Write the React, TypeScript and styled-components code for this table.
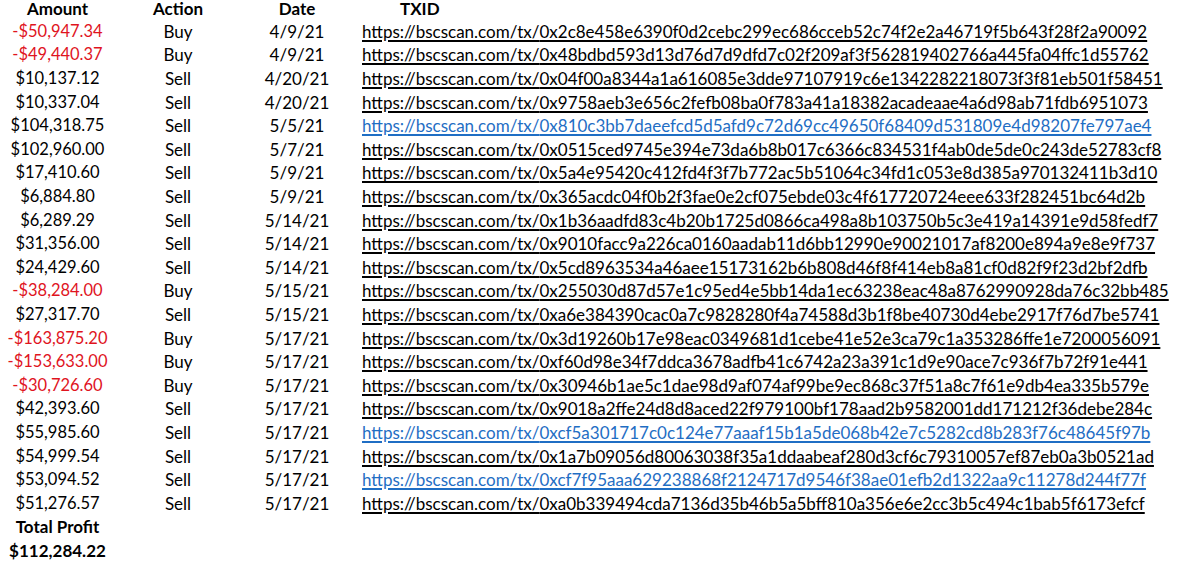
import { createGlobalStyle, styled } from "styled-components";

type Tx = {
  amount: string;
  action: "Buy" | "Sell";
  date: string;
  hash: string;
  visited?: boolean;
};

const rows: Tx[] = [
  { amount: "-$50,947.34", action: "Buy", date: "4/9/21", hash: "0x2c8e458e6390f0d2cebc299ec686cceb52c74f2e2a46719f5b643f28f2a90092" },
  { amount: "-$49,440.37", action: "Buy", date: "4/9/21", hash: "0x48bdbd593d13d76d7d9dfd7c02f209af3f562819402766a445fa04ffc1d55762" },
  { amount: "$10,137.12", action: "Sell", date: "4/20/21", hash: "0x04f00a8344a1a616085e3dde97107919c6e1342282218073f3f81eb501f58451" },
  { amount: "$10,337.04", action: "Sell", date: "4/20/21", hash: "0x9758aeb3e656c2fefb08ba0f783a41a18382acadeaae4a6d98ab71fdb6951073" },
  { amount: "$104,318.75", action: "Sell", date: "5/5/21", hash: "0x810c3bb7daeefcd5d5afd9c72d69cc49650f68409d531809e4d98207fe797ae4", visited: true },
  { amount: "$102,960.00", action: "Sell", date: "5/7/21", hash: "0x0515ced9745e394e73da6b8b017c6366c834531f4ab0de5de0c243de52783cf8" },
  { amount: "$17,410.60", action: "Sell", date: "5/9/21", hash: "0x5a4e95420c412fd4f3f7b772ac5b51064c34fd1c053e8d385a970132411b3d10" },
  { amount: "$6,884.80", action: "Sell", date: "5/9/21", hash: "0x365acdc04f0b2f3fae0e2cf075ebde03c4f617720724eee633f282451bc64d2b" },
  { amount: "$6,289.29", action: "Sell", date: "5/14/21", hash: "0x1b36aadfd83c4b20b1725d0866ca498a8b103750b5c3e419a14391e9d58fedf7" },
  { amount: "$31,356.00", action: "Sell", date: "5/14/21", hash: "0x9010facc9a226ca0160aadab11d6bb12990e90021017af8200e894a9e8e9f737" },
  { amount: "$24,429.60", action: "Sell", date: "5/14/21", hash: "0x5cd8963534a46aee15173162b6b808d46f8f414eb8a81cf0d82f9f23d2bf2dfb" },
  { amount: "-$38,284.00", action: "Buy", date: "5/15/21", hash: "0x255030d87d57e1c95ed4e5bb14da1ec63238eac48a8762990928da76c32bb485" },
  { amount: "$27,317.70", action: "Sell", date: "5/15/21", hash: "0xa6e384390cac0a7c9828280f4a74588d3b1f8be40730d4ebe2917f76d7be5741" },
  { amount: "-$163,875.20", action: "Buy", date: "5/17/21", hash: "0x3d19260b17e98eac0349681d1cebe41e52e3ca79c1a353286ffe1e7200056091" },
  { amount: "-$153,633.00", action: "Buy", date: "5/17/21", hash: "0xf60d98e34f7ddca3678adfb41c6742a23a391c1d9e90ace7c936f7b72f91e441" },
  { amount: "-$30,726.60", action: "Buy", date: "5/17/21", hash: "0x30946b1ae5c1dae98d9af074af99be9ec868c37f51a8c7f61e9db4ea335b579e" },
  { amount: "$42,393.60", action: "Sell", date: "5/17/21", hash: "0x9018a2ffe24d8d8aced22f979100bf178aad2b9582001dd171212f36debe284c" },
  { amount: "$55,985.60", action: "Sell", date: "5/17/21", hash: "0xcf5a301717c0c124e77aaaf15b1a5de068b42e7c5282cd8b283f76c48645f97b", visited: true },
  { amount: "$54,999.54", action: "Sell", date: "5/17/21", hash: "0x1a7b09056d80063038f35a1ddaabeaf280d3cf6c79310057ef87eb0a3b0521ad" },
  { amount: "$53,094.52", action: "Sell", date: "5/17/21", hash: "0xcf7f95aaa629238868f2124717d9546f38ae01efb2d1322aa9c11278d244f77f", visited: true },
  { amount: "$51,276.57", action: "Sell", date: "5/17/21", hash: "0xa0b339494cda7136d35b46b5a5bff810a356e6e2cc3b5c494c1bab5f6173efcf" },
];

const App = () => {
  return (
    <>
      <GlobalStyle />
      <Sheet>
        <Head>Amount</Head>
        <Head>Action</Head>
        <Head>Date</Head>
        <Head $txid>TXID</Head>
        {rows.map((r, idx) => (
          <Row key={idx}>
            <Amount $negative={r.amount.startsWith("-")}>{r.amount}</Amount>
            <Cell>{r.action}</Cell>
            <Cell>{r.date}</Cell>
            <Link $visited={r.visited}>https://bscscan.com/tx/{r.hash}</Link>
          </Row>
        ))}
        <Total>Total Profit</Total>
        <Total>$112,284.22</Total>
      </Sheet>
    </>
  );
};

export default App;

const GlobalStyle = createGlobalStyle`
  html, body {
    margin: 0;
    padding: 0;
    background: #ffffff;
  }
`;

const Sheet = styled.div`
  display: grid;
  grid-template-columns: 115px 126px 112px 1fr;
  grid-template-rows: 19.6px;
  grid-auto-rows: 23.6px;
  align-items: center;

  font-family: Lato, "Liberation Sans", sans-serif;
  font-size: 17px;
  line-height: 21px;
  color: #000;
`;

const Row = styled.div`
  display: contents;
`;

const Head = styled.div<{ $txid?: boolean }>`
  align-self: start;
  line-height: 18px;
  font-weight: 700;
  text-align: ${(p) => (p.$txid ? "left" : "center")};
  padding-left: ${(p) => (p.$txid ? "47px" : "0")};
`;

const Cell = styled.div`
  text-align: center;
  white-space: nowrap;
`;

const Amount = styled(Cell)<{ $negative: boolean }>`
  font-size: 16.5px;
  color: ${(p) => (p.$negative ? "#e0141e" : "#000")};
`;

const Link = styled.div<{ $visited?: boolean }>`
  padding-left: 9px;
  white-space: nowrap;
  text-decoration: underline;
  text-decoration-thickness: 1.5px;
  text-underline-offset: 2px;
  color: ${(p) => (p.$visited ? "#1f6ec4" : "#000")};
`;

const Total = styled.div`
  grid-column: 1;
  font-weight: 700;
  text-align: center;
  white-space: nowrap;
`;
